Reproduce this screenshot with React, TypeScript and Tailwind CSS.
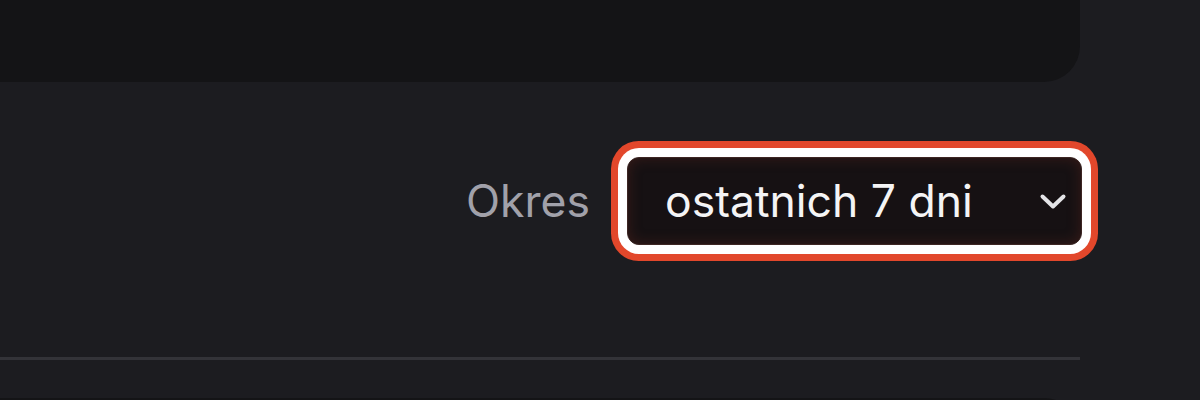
const ChevronIcon = () => (
  <svg width="28" height="17" viewBox="0 0 28 17" fill="none" className="shrink-0">
    <polyline
      points="3.5,3.5 14,13.5 24.5,3.5"
      stroke="#e4e4e7"
      strokeWidth="4"
      strokeLinecap="round"
      strokeLinejoin="round"
    />
  </svg>
)

const App = () => {
  return (
    <div
      className="h-[400px] w-[1200px] overflow-hidden bg-[#1c1c20]"
      style={{ fontFamily: 'Inter, "Noto Sans", sans-serif' }}
    >
      <div className="flex w-[1080px] flex-col">
        {/* top card */}
        <div className="h-[82px] rounded-br-[36px] bg-[#141416]" />

        {/* filter row */}
        <div className="flex items-center justify-end gap-[37px] pt-[75px] pb-[112px]">
          <span className="text-[44.5px] leading-none text-[#a1a1aa]">Okres</span>
          <button className="mr-[-2px] flex h-[88px] w-[455px] items-center justify-between rounded-[12px] border border-[#3d2623] bg-[#161113] pl-[37px] pr-[14px] shadow-[inset_0_0_14px_rgba(120,45,35,0.35),0_0_0_9px_#ffffff,0_0_0_16px_#e2472b]">
            <span className="text-[44.5px] leading-none text-[#f4f4f5]">ostatnich 7 dni</span>
            <ChevronIcon />
          </button>
        </div>

        {/* divider */}
        <div className="h-[3px] bg-[#333338]" />

        {/* next card */}
        <div className="mt-[38px] h-[60px] rounded-tr-[36px] bg-[#141416]" />
      </div>
    </div>
  )
}

export default App
